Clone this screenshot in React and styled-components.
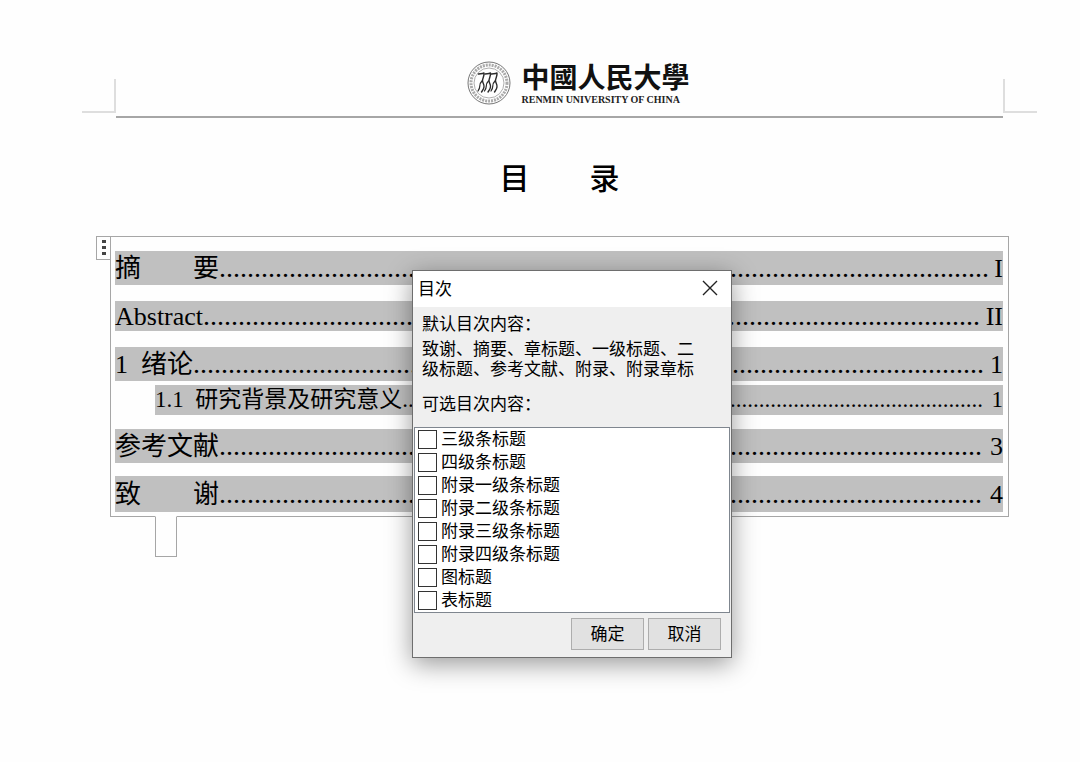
import React from "react";
import styled, { createGlobalStyle } from "styled-components";

const entradas = [
  { titulo: "摘\u3000\u3000要", pagina: "I", puntos: 110, alto: 34, espacio: 16 },
  { titulo: "Abstract", pagina: "II", puntos: 111, alto: 30, espacio: 16 },
  { titulo: "1  绪论", pagina: "1", puntos: 113, alto: 34, espacio: 4 },
  { titulo: "1.1  研究背景及研究意义", pagina: "1", puntos: 101, alto: 30, espacio: 14, sub: true },
  { titulo: "参考文献", pagina: "3", puntos: 109, alto: 34, espacio: 13 },
  { titulo: "致\u3000\u3000谢", pagina: "4", puntos: 109, alto: 36, espacio: 0 },
];

const opciones = [
  "三级条标题",
  "四级条标题",
  "附录一级条标题",
  "附录二级条标题",
  "附录三级条标题",
  "附录四级条标题",
  "图标题",
  "表标题",
];

const Emblema = () => {
  return (
    <svg width="44" height="44" viewBox="0 0 44 44" fill="none" aria-hidden="true">
      <circle cx="22" cy="22" r="21" strokeWidth="1" stroke="#777" />
      <circle cx="22" cy="22" r="18" strokeWidth="3" stroke="#aaa" strokeDasharray="2 1" />
      <circle cx="22" cy="22" r="15" strokeWidth="0.8" stroke="#999" />
      {[0, 6.5, 13].map((x) => (
        <g key={x} transform={`translate(${x} 0)`} stroke="#2a2a2a" strokeLinecap="round" strokeLinejoin="round">
          <path strokeWidth="1.4" d="M11.5 13 C13.5 12.5 15 13 17 12 C17.5 15 15.5 17 15.5 19.5 C15.5 22 17.5 23.5 17 26 C16.8 28 15.5 29.5 14.5 31" />
          <path strokeWidth="1.2" d="M15 20 C13.5 21.5 12.5 23 12.8 25 C12.8 27 12 28.5 11 30" />
        </g>
      ))}
    </svg>
  )
}

const App = () => {
  return (
    <Pagina>
      <Global />
      <Cabecera>
        <Esquina />
        <Membrete>
          <Emblema />
          <Nombre>
            <NombreChino>中國人民大學</NombreChino>
            <NombreIngles>RENMIN UNIVERSITY OF CHINA</NombreIngles>
          </Nombre>
        </Membrete>
        <Esquina $derecha />
      </Cabecera>

      <Titulo>{"目\u3000\u3000录"}</Titulo>

      <Indice>
        <Asa type="button" aria-label="移动">
          <Punto />
          <Punto />
          <Punto />
        </Asa>
        {entradas.map((e) => (
          <Fila key={e.titulo} $alto={e.alto} $espacio={e.espacio} $sub={e.sub}>
            <span>{e.titulo}</span>
            <Guia $sub={e.sub} aria-hidden="true">{".".repeat(e.puntos)}</Guia>
            <span>{e.pagina}</span>
          </Fila>
        ))}
        <Pestana />
      </Indice>

      <Dialogo role="dialog" aria-labelledby="titulo-dialogo">
        <Barra>
          <TituloDialogo id="titulo-dialogo">目次</TituloDialogo>
          <Cerrar type="button" aria-label="关闭">
            <svg width="16" height="16" viewBox="0 0 16 16" stroke="#222" strokeWidth="1.4" aria-hidden="true">
              <path d="M1 1 L15 15 M15 1 L1 15" />
            </svg>
          </Cerrar>
        </Barra>
        <Texto>
          <p>默认目次内容：</p>
          <Contenido>致谢、摘要、章标题、一级标题、二级标题、参考文献、附录、附录章标</Contenido>
          <p>可选目次内容：</p>
        </Texto>
        <Lista>
          {opciones.map((o) => (
            <li key={o}>
              <Opcion>
                <Casilla type="checkbox" />
                {o}
              </Opcion>
            </li>
          ))}
        </Lista>
        <Acciones>
          <Boton type="button">确定</Boton>
          <Boton type="button">取消</Boton>
        </Acciones>
      </Dialogo>
    </Pagina>
  )
}

export default App

const Global = createGlobalStyle`
  * {
    box-sizing: border-box;
  }
  body {
    margin: 0;
    background-color: #fefefe;
    color: #000000;
    font-family: "Liberation Serif", "Noto Sans CJK SC", serif;
  }
  p, h1, h2, ul {
    margin: 0;
    padding: 0;
  }
`;

const Pagina = styled.main`
  position: relative;
  min-height: 100vh;
  padding: 60px 43px 0 82px;
`;

const Cabecera = styled.header`
  display: flex;
  align-items: flex-end;
`;

const Esquina = styled.div`
  width: 34px;
  height: 34px;
  margin-bottom: 5px;
  border-bottom: 2px solid #dedede;
  border-left: ${(p) => (p.$derecha ? "2px solid #dedede" : "none")};
  border-right: ${(p) => (p.$derecha ? "none" : "2px solid #dedede")};
`;

const Membrete = styled.div`
  flex: 1;
  display: flex;
  justify-content: center;
  align-items: flex-start;
  gap: 10px;
  padding: 1px 0 7px 38px;
  border-bottom: 2px solid #a6a6a6;
`;

const Nombre = styled.div`
  display: flex;
  flex-direction: column;
`;

const NombreChino = styled.span`
  font-family: "Noto Sans CJK TC", sans-serif;
  font-size: 28px;
  font-weight: 700;
  line-height: 30px;
  color: #111111;
`;

const NombreIngles = styled.span`
  font-size: 10px;
  font-weight: 700;
  line-height: 18px;
  white-space: nowrap;
  color: #222222;
`;

const Titulo = styled.h1`
  margin-top: 39px;
  font-size: 30px;
  font-weight: 500;
  line-height: 44px;
  text-align: center;
`;

const Indice = styled.section`
  position: relative;
  margin: 35px 28px 0 28px;
  padding: 14px 5px 4px 4px;
  border: 1px solid #a6a6a6;
`;

const Asa = styled.button`
  position: absolute;
  top: -1px;
  left: -15px;
  width: 15px;
  height: 24px;
  display: flex;
  flex-direction: column;
  align-items: center;
  gap: 3px;
  padding: 3px 0;
  border: 1px solid #a6a6a6;
  background-color: #fefefe;
`;

const Punto = styled.span`
  width: 4px;
  height: 3px;
  background-color: #444444;
`;

const Fila = styled.div`
  display: flex;
  align-items: baseline;
  height: ${(p) => p.$alto}px;
  margin-bottom: ${(p) => p.$espacio}px;
  margin-left: ${(p) => (p.$sub ? "40px" : "0")};
  background-color: #c0c0c0;
  font-size: ${(p) => (p.$sub ? "23px" : "26px")};
  line-height: ${(p) => p.$alto}px;
  white-space: pre;
`;

const Guia = styled.span`
  flex: 1;
  min-width: 0;
  margin-right: 5px;
  overflow: hidden;
  font-size: ${(p) => (p.$sub ? "23px" : "28px")};
`;

const Pestana = styled.div`
  position: absolute;
  top: 100%;
  left: 44px;
  width: 22px;
  height: 41px;
  border: 1px solid #a6a6a6;
  border-top-color: #fefefe;
`;

const Dialogo = styled.div`
  position: absolute;
  top: 270px;
  left: calc(50% - 128px);
  width: 320px;
  border: 1px solid #6e6e6e;
  background-color: #efefef;
  box-shadow: 0 6px 24px rgba(0, 0, 0, 0.4);
  font-family: "Noto Sans CJK SC", sans-serif;
  font-size: 17px;
  line-height: 20px;
`;

const Barra = styled.div`
  height: 36px;
  display: flex;
  align-items: center;
  justify-content: space-between;
  padding: 0 13px 2px 5px;
  background-color: #ffffff;
`;

const TituloDialogo = styled.h2`
  font-size: 17px;
  font-weight: 400;
`;

const Cerrar = styled.button`
  display: flex;
  padding: 0;
  border: none;
  background: none;
`;

const Texto = styled.div`
  padding: 6px 24px 14px 9px;
`;

const Contenido = styled.p`
  margin: 5px 0 15px;
  line-break: anywhere;
`;

const Lista = styled.ul`
  margin: 0 1px;
  border: 1px solid #7f868f;
  background-color: #ffffff;
  list-style: none;
`;

const Opcion = styled.label`
  height: 23px;
  display: flex;
  align-items: flex-start;
  gap: 4px;
  padding-left: 3px;
`;

const Casilla = styled.input`
  appearance: none;
  width: 19px;
  height: 19px;
  margin: 2px 0 0;
  border: 1px solid #333333;
  background-color: #ffffff;
  &:checked {
    background-color: #333333;
  }
`;

const Acciones = styled.div`
  display: flex;
  justify-content: flex-end;
  gap: 4px;
  padding: 5px 10px 7px;
`;

const Boton = styled.button`
  width: 73px;
  height: 32px;
  padding: 0 0 2px;
  border: 1px solid #adadad;
  background-color: #e1e1e1;
  color: #000000;
  font-family: inherit;
  font-size: 17px;
  line-height: 20px;
`;
